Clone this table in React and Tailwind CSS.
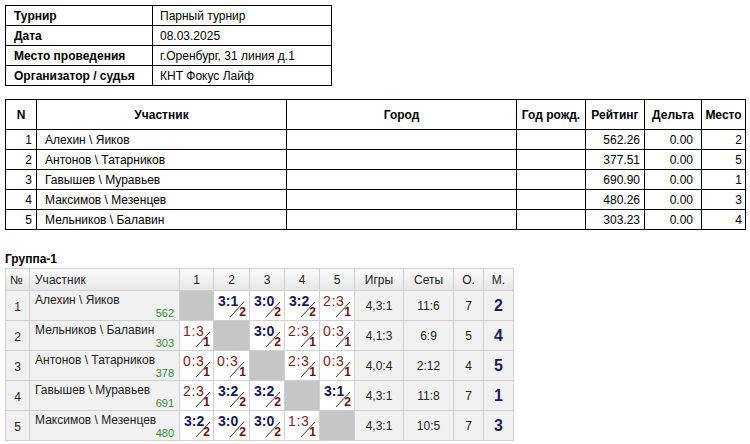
import React from 'react';

const info = [
  ['Турнир', 'Парный турнир'],
  ['Дата', '08.03.2025'],
  ['Место проведения', 'г.Оренбург, 31 линия д.1'],
  ['Организатор / судья', 'КНТ Фокус Лайф'],
];

const players = [
  [1, 'Алехин \\ Яиков', '562.26', '0.00', 2],
  [2, 'Антонов \\ Татарников', '377.51', '0.00', 5],
  [3, 'Гавышев \\ Муравьев', '690.90', '0.00', 1],
  [4, 'Максимов \\ Мезенцев', '480.26', '0.00', 3],
  [5, 'Мельников \\ Балавин', '303.23', '0.00', 4],
];

// score: [text, points, win]
const group = [
  { name: 'Алехин \\ Яиков', rating: 562, scores: [null, ['3:1', 2, true], ['3:0', 2, true], ['3:2', 2, true], ['2:3', 1, false]], games: '4,3:1', sets: '11:6', pts: 7, place: 2 },
  { name: 'Мельников \\ Балавин', rating: 303, scores: [['1:3', 1, false], null, ['3:0', 2, true], ['2:3', 1, false], ['0:3', 1, false]], games: '4,1:3', sets: '6:9', pts: 5, place: 4 },
  { name: 'Антонов \\ Татарников', rating: 378, scores: [['0:3', 1, false], ['0:3', 1, false], null, ['2:3', 1, false], ['0:3', 1, false]], games: '4,0:4', sets: '2:12', pts: 4, place: 5 },
  { name: 'Гавышев \\ Муравьев', rating: 691, scores: [['2:3', 1, false], ['3:2', 2, true], ['3:2', 2, true], null, ['3:1', 2, true]], games: '4,3:1', sets: '11:8', pts: 7, place: 1 },
  { name: 'Максимов \\ Мезенцев', rating: 480, scores: [['3:2', 2, true], ['3:0', 2, true], ['3:0', 2, true], ['1:3', 1, false], null], games: '4,3:1', sets: '10:5', pts: 7, place: 3 },
];

const ScoreCell = ({ score }) => {
  if (!score) return <td className="border border-[#d0d0d0] bg-[#c6c6c6] p-0" />;
  const [text, pts, win] = score;
  return (
    <td className="border border-[#d0d0d0] bg-white p-0 align-top">
      <div className="relative h-[29px]">
        <div
          className={
            win
              ? 'pl-[4px] pt-[3px] text-[14px] font-bold leading-[15px] text-[#16165c]'
              : 'pl-[3px] pt-[3px] text-[14px] leading-[15px] tracking-[0.6px] text-[#7a2424]'
          }
        >
          {text}
        </div>
        <svg className="absolute left-0 top-0" width="36" height="29">
          <line x1="16" y1="26" x2="30" y2="11" stroke="#333" strokeWidth="1" />
        </svg>
        <span className="absolute right-[3px] bottom-[2px] text-[12px] font-bold leading-[12px] text-[#6e1010]">
          {pts}
        </span>
      </div>
    </td>
  );
};

const App = () => {
  return (
    <div className="bg-white min-h-[444px] pl-[5px] pt-[5px] text-[12px] text-black" style={{ fontFamily: '"Liberation Sans", Arial, sans-serif' }}>
      <table className="border-collapse w-[326px] table-fixed">
        <colgroup>
          <col className="w-[147px]" />
          <col className="w-[179px]" />
        </colgroup>
        <tbody>
          {info.map(([k, v]) => (
            <tr key={k} className="h-[20px]">
              <td className="border border-black pl-[8px] py-0 font-bold">{k}</td>
              <td className="border border-black pl-[7px] py-0">{v}</td>
            </tr>
          ))}
        </tbody>
      </table>

      <table className="border-collapse w-[741px] table-fixed mt-[13px]">
        <colgroup>
          <col className="w-[31px]" />
          <col className="w-[250px]" />
          <col className="w-[230px]" />
          <col className="w-[69px]" />
          <col className="w-[59px]" />
          <col className="w-[57px]" />
          <col className="w-[44px]" />
        </colgroup>
        <thead>
          <tr className="h-[30px] font-bold">
            <th className="border border-black">N</th>
            <th className="border border-black">Участник</th>
            <th className="border border-black">Город</th>
            <th className="border border-black">Год рожд.</th>
            <th className="border border-black">Рейтинг</th>
            <th className="border border-black">Дельта</th>
            <th className="border border-black">Место</th>
          </tr>
        </thead>
        <tbody>
          {players.map(([n, name, rating, delta, place]) => (
            <tr key={n} className="h-[20px]">
              <td className="border border-black text-right pr-[4px] py-0">{n}</td>
              <td className="border border-black pl-[8px] py-0">{name}</td>
              <td className="border border-black py-0" />
              <td className="border border-black py-0" />
              <td className="border border-black text-right pr-[4px] py-0">{rating}</td>
              <td className="border border-black text-right pr-[8px] py-0">{delta}</td>
              <td className="border border-black text-right pr-[3px] py-0">{place}</td>
            </tr>
          ))}
        </tbody>
      </table>

      <div className="mt-[22px] font-bold leading-[14px]">Группа-1</div>

      <table className="border-collapse w-[509px] table-fixed mt-[2px] border border-[#c4c4c4] text-[#222]">
        <colgroup>
          <col className="w-[24px]" />
          <col className="w-[150px]" />
          <col className="w-[34px]" />
          <col className="w-[36px]" />
          <col className="w-[35px]" />
          <col className="w-[35px]" />
          <col className="w-[35px]" />
          <col className="w-[49px]" />
          <col className="w-[50px]" />
          <col className="w-[30px]" />
          <col className="w-[30px]" />
        </colgroup>
        <thead>
          <tr className="h-[22px] bg-gradient-to-b from-[#fbfbfb] to-[#e6e6e6] font-normal">
            <th className="border border-[#d0d0d0] font-normal text-left pl-[4px]">№</th>
            <th className="border border-[#d0d0d0] font-normal text-left pl-[5px]">Участник</th>
            {[1, 2, 3, 4, 5].map((i) => (
              <th key={i} className="border border-[#d0d0d0] font-normal text-center">{i}</th>
            ))}
            <th className="border border-[#d0d0d0] font-normal text-center">Игры</th>
            <th className="border border-[#d0d0d0] font-normal text-center">Сеты</th>
            <th className="border border-[#d0d0d0] font-normal text-center">О.</th>
            <th className="border border-[#d0d0d0] font-normal text-center">М.</th>
          </tr>
        </thead>
        <tbody>
          {group.map((row, i) => (
            <tr key={i} className="h-[30px]">
              <td className="border border-[#d0d0d0] bg-[#f1f1f1] text-center pt-[3px]">{i + 1}</td>
              <td className="border border-[#d0d0d0] bg-[#f1f1f1] p-0 align-top">
                <div className="flex flex-col h-[29px] px-[5px] pt-[2px]">
                  <span className="leading-[14px]">{row.name}</span>
                  <span className="self-end text-[11px] leading-[12px] text-[#2f8f2f]">{row.rating}</span>
                </div>
              </td>
              {row.scores.map((s, j) => (
                <ScoreCell key={j} score={s} />
              ))}
              <td className="border border-[#d0d0d0] bg-[#f1f1f1] text-center">{row.games}</td>
              <td className="border border-[#d0d0d0] bg-[#f1f1f1] text-center">{row.sets}</td>
              <td className="border border-[#d0d0d0] bg-[#f1f1f1] text-center">{row.pts}</td>
              <td className="border border-[#d0d0d0] bg-[#f1f1f1] text-center text-[16px] font-bold text-[#1c1c66]">{row.place}</td>
            </tr>
          ))}
        </tbody>
      </table>
    </div>
  );
};

export default App;
